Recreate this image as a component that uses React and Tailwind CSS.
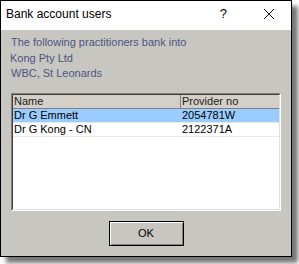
import React from 'react';

const rows = [
  { name: 'Dr G Emmett', provider: '2054781W', selected: true },
  { name: 'Dr G Kong - CN', provider: '2122371A', selected: false },
];

export default function App() {
  return (
    <div className="w-[299px] h-[264px] bg-white relative font-['Liberation_Sans',Arial,sans-serif]">
      {/* drop shadow */}
      <div className="absolute left-[6px] top-[6px] w-[292px] h-[257px] bg-[#777] blur-[2px]" />
      <div className="absolute left-0 top-0 w-[292px] h-[257px] border border-black bg-[#c8c6c1] flex flex-col">
        <div className="h-[29px] bg-white flex items-center pl-[5px] pr-[8px] pb-[3px]">
          <span className="text-[12px] text-black flex-1">Bank account users</span>
          <span className="text-[13px] text-black mr-[36px]">?</span>
          <svg width="12" height="12" viewBox="0 0 12 12" className="mr-[8px]">
            <path d="M1 1 L11 11 M11 1 L1 11" stroke="#111" strokeWidth="1" />
          </svg>
        </div>
        <div className="px-[9px] pt-[5px] text-[11px] leading-[15.5px] text-[#4b5584]">
          <div className="ml-[1px]">The following practitioners bank into</div>
          <div>Kong Pty Ltd</div>
          <div className="ml-[1px]">WBC, St Leonards</div>
        </div>
        <div className="mx-[10px] mt-[11px] h-[118px] border border-[#808080] border-r-white border-b-white">
          <div className="h-full bg-white border border-[#404040] border-r-[#e0e0e0] border-b-[#e0e0e0] text-[11px] text-black">
            <div className="flex h-[14px] bg-[#d4d0c8] text-[#222] border-b border-[#808080] leading-[13px]">
              <div className="w-[168px] pl-[1px] border-r border-[#808080]">Name</div>
              <div className="flex-1 pl-[1px]">Provider no</div>
            </div>
            {rows.map((r) => (
              <div key={r.name} className="flex h-[14px] border-b border-[#e8e8e8] leading-[13px]">
                <div className={`w-[168px] pl-[1px] ${r.selected ? 'bg-[#99ccff]' : ''}`}>{r.name}</div>
                <div className={`flex-1 pl-[1px] ${r.selected ? 'bg-[#99ccff]' : ''}`}>{r.provider}</div>
              </div>
            ))}
          </div>
        </div>
        <div className="flex justify-center mt-[10px]">
          <button className="w-[75px] h-[25px] border border-black bg-[#c8c6c1] text-[11px] text-black shadow-[inset_1px_1px_0_#fff,inset_-1px_-1px_0_#808080]">
            OK
          </button>
        </div>
      </div>
    </div>
  );
}
